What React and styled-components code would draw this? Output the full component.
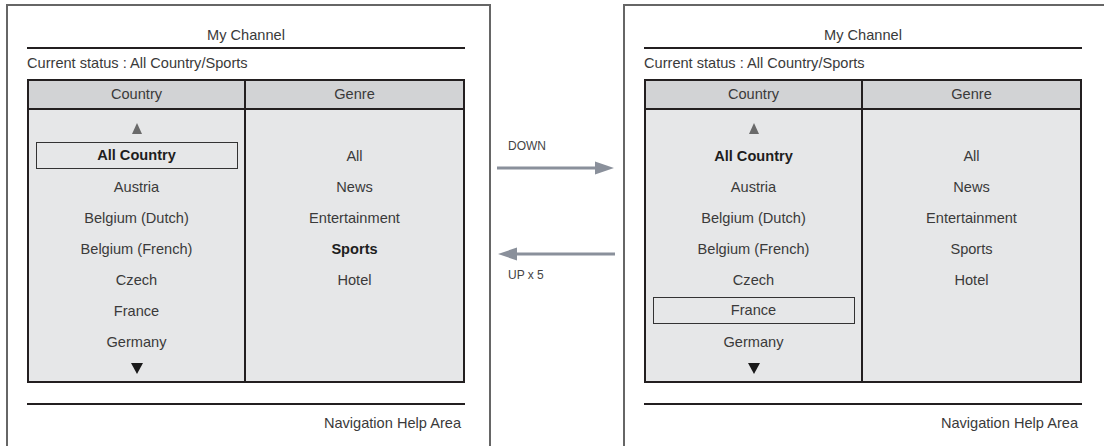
import styled, { createGlobalStyle } from "styled-components";

const GlobalStyle = createGlobalStyle`
html, body {
  margin: 0;
  padding: 0;
  background: #fff;
}
body {
  font-family: "Liberation Sans", Arial, sans-serif;
  color: #3a3a3a;
  overflow: hidden;
}
`

const Page = styled.div`
display: flex;
align-items: flex-start;
width: 1104px;
height: 446px;
padding: 4px 0 0 6px;
box-sizing: border-box;
overflow: hidden;
`

const Panel = styled.section`
flex: none;
width: 485px;
height: 470px;
box-sizing: border-box;
border: 2px solid #666;
padding: 0 24px 0 19px;
font-size: 14.6px;
`

const Title = styled.div`
padding: 21px 0 4px;
line-height: 16px;
text-align: center;
border-bottom: 2px solid #231f20;
`

const Status = styled.div`
line-height: 28px;
margin-bottom: 2px;
`

const Table = styled.div`
display: grid;
grid-template-columns: 1fr 1fr;
border: 2px solid #231f20;
`

const Column = styled.div`
display: flex;
flex-direction: column;
border-right: ${p => (p.$divider ? "2px solid #231f20" : "none")};
`

const Head = styled.div`
height: 27px;
line-height: 27px;
text-align: center;
background: #d2d3d5;
border-bottom: 2px solid #231f20;
`

const List = styled.div`
height: 271px;
box-sizing: border-box;
padding-top: 4px;
background: #e6e7e8;
`

const ArrowRow = styled.div`
display: flex;
align-items: center;
justify-content: center;
height: ${p => p.$h}px;
`

const Up = styled.div`
width: 0;
height: 0;
border-left: 5.5px solid transparent;
border-right: 5.5px solid transparent;
border-bottom: 11px solid #6a6a6a;
margin-top: 2px;
`

const Down = styled.div`
width: 0;
height: 0;
border-left: 6px solid transparent;
border-right: 6px solid transparent;
border-top: 11px solid #1a1a1a;
margin-bottom: 2px;
`

const Item = styled.div`
display: flex;
align-items: center;
justify-content: center;
height: 31px;
`

const Label = styled.div`
box-sizing: border-box;
text-align: center;
font-weight: ${p => (p.$bold ? 700 : 400)};
color: ${p => (p.$bold ? "#1e1e1e" : "#3a3a3a")};
${p => p.$focus && `
  width: calc(100% - 13px);
  height: 27px;
  line-height: 24px;
  border: 1.5px solid #333;
`}
`

const Footer = styled.div`
margin-top: 20px;
border-top: 2px solid #231f20;
padding: 10px 4px 0 0;
line-height: 16px;
text-align: right;
`

const Middle = styled.div`
flex: none;
width: 132px;
display: flex;
flex-direction: column;
padding-top: 134px;
font-size: 12px;
color: #444;
`

const Caption = styled.div`
line-height: 16px;
margin-left: 17px;
`

const ArrowSvg = styled.svg`
display: block;
margin: ${p => p.$m};
`

const COUNTRIES = ["All Country", "Austria", "Belgium (Dutch)", "Belgium (French)", "Czech", "France", "Germany"]
const GENRES = ["All", "News", "Entertainment", "Sports", "Hotel"]

const ChannelPanel = ({ focus, boldCountry, boldGenre }) => {
    return (
        <Panel>
            <Title>My Channel</Title>
            <Status>Current status : All Country/Sports</Status>
            <Table>
                <Column $divider>
                    <Head>Country</Head>
                    <List>
                        <ArrowRow $h={26}><Up /></ArrowRow>
                        {
                            COUNTRIES.map((c, idx) => (
                                <Item key={idx}>
                                    <Label $bold={c === boldCountry} $focus={c === focus}>{c}</Label>
                                </Item>
                            ))
                        }
                        <ArrowRow $h={24}><Down /></ArrowRow>
                    </List>
                </Column>
                <Column>
                    <Head>Genre</Head>
                    <List>
                        <ArrowRow $h={26} />
                        {
                            GENRES.map((g, idx) => (
                                <Item key={idx}>
                                    <Label $bold={g === boldGenre}>{g}</Label>
                                </Item>
                            ))
                        }
                    </List>
                </Column>
            </Table>
            <Footer>Navigation Help Area</Footer>
        </Panel>
    )
}

const RightArrow = () => (
    <ArrowSvg width="117" height="14" viewBox="0 0 117 14" $m="7px 0 0 6px">
        <line x1="0" y1="7" x2="100" y2="7" stroke="#8a909b" strokeWidth="3" />
        <polygon points="98,0.5 117,7 98,13.5" fill="#8a909b" />
    </ArrowSvg>
)

const LeftArrow = () => (
    <ArrowSvg width="117" height="14" viewBox="0 0 117 14" $m="72px 0 6px 7px">
        <line x1="17" y1="7" x2="117" y2="7" stroke="#8a909b" strokeWidth="3" />
        <polygon points="19,0.5 0,7 19,13.5" fill="#8a909b" />
    </ArrowSvg>
)

const App = () => {
    return (
        <Page>
            <GlobalStyle />
            <ChannelPanel focus="All Country" boldCountry="All Country" boldGenre="Sports" />
            <Middle>
                <Caption>DOWN</Caption>
                <RightArrow />
                <LeftArrow />
                <Caption>UP x 5</Caption>
            </Middle>
            <ChannelPanel focus="France" boldCountry="All Country" />
        </Page>
    )
}

export default App;
